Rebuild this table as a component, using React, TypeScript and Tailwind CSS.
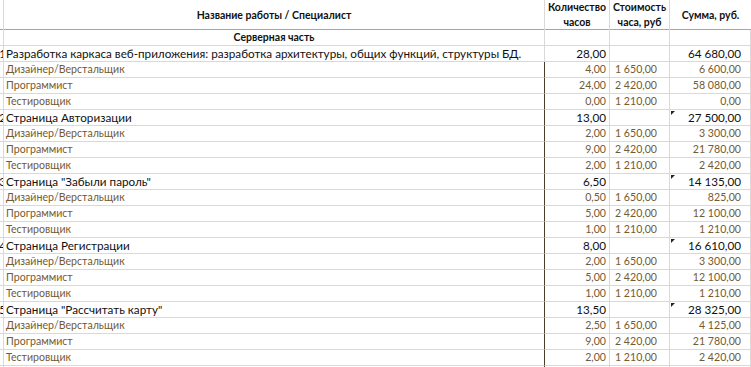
import React from "react";

type Item = [string, string, string, string];
type Group = { n: string; name: string; hours: string; sum: string; mark: boolean; items: Item[] };

const groups: Group[] = [
  {
    n: "1",
    name: "Разработка каркаса веб-приложения: разработка архитектуры, общих функций, структуры БД.",
    hours: "28,00",
    sum: "64 680,00",
    mark: false,
    items: [
      ["Дизайнер/Верстальщик", "4,00", "1 650,00", "6 600,00"],
      ["Программист", "24,00", "2 420,00", "58 080,00"],
      ["Тестировщик", "0,00", "1 210,00", "0,00"],
    ],
  },
  {
    n: "2",
    name: "Страница Авторизации",
    hours: "13,00",
    sum: "27 500,00",
    mark: true,
    items: [
      ["Дизайнер/Верстальщик", "2,00", "1 650,00", "3 300,00"],
      ["Программист", "9,00", "2 420,00", "21 780,00"],
      ["Тестировщик", "2,00", "1 210,00", "2 420,00"],
    ],
  },
  {
    n: "3",
    name: 'Страница "Забыли пароль"',
    hours: "6,50",
    sum: "14 135,00",
    mark: true,
    items: [
      ["Дизайнер/Верстальщик", "0,50", "1 650,00", "825,00"],
      ["Программист", "5,00", "2 420,00", "12 100,00"],
      ["Тестировщик", "1,00", "1 210,00", "1 210,00"],
    ],
  },
  {
    n: "4",
    name: "Страница Регистрации",
    hours: "8,00",
    sum: "16 610,00",
    mark: true,
    items: [
      ["Дизайнер/Верстальщик", "2,00", "1 650,00", "3 300,00"],
      ["Программист", "5,00", "2 420,00", "12 100,00"],
      ["Тестировщик", "1,00", "1 210,00", "1 210,00"],
    ],
  },
  {
    n: "5",
    name: 'Страница "Рассчитать карту"',
    hours: "13,50",
    sum: "28 325,00",
    mark: true,
    items: [
      ["Дизайнер/Верстальщик", "2,50", "1 650,00", "4 125,00"],
      ["Программист", "9,00", "2 420,00", "21 780,00"],
      ["Тестировщик", "2,00", "1 210,00", "2 420,00"],
    ],
  },
];

const grid = "grid grid-cols-[4px_541px_65px_60px_1fr]";
const cell = "border-r border-b border-[#d9d9d9] h-4 flex items-center overflow-hidden whitespace-nowrap";

function Mark() {
  return (
    <span className="absolute left-[1px] top-[1px] w-0 h-0 border-t-[4px] border-r-[4px] border-t-[#222] border-r-transparent" />
  );
}

function GroupRow({ g, first }: { g: Group; first: boolean }) {
  const f = "font-['Lato',sans-serif] text-[11.7px] text-[#111]";
  return (
    <div className={grid}>
      <div className={`${cell} justify-end ${f}`}>
        <span className="translate-x-[3px]">{g.n}</span>
      </div>
      <div className={`${cell} ${f} pl-[2px] ${first ? "" : "border-r-[#4a3c2c]"}`}>{g.name}</div>
      <div className={`${cell} ${f} justify-end pr-[3px]`}>{g.hours}</div>
      <div className={`${cell}`} />
      <div className={`${cell} ${f} justify-end pr-[9px] relative`}>
        {g.mark && <Mark />}
        {g.sum}
      </div>
    </div>
  );
}

function ItemRow({ it }: { it: Item }) {
  const f = "font-['Lato',sans-serif] text-[10.6px] text-[#735a33]";
  return (
    <div className={grid}>
      <div className={cell} />
      <div className={`${cell} ${f} pl-[2px] border-r-[#4a3c2c]`}>{it[0]}</div>
      <div className={`${cell} ${f} justify-end pr-[3px]`}>{it[1]}</div>
      <div className={`${cell} ${f} justify-end pr-[12px]`}>{it[2]}</div>
      <div className={`${cell} ${f} justify-end pr-[9px]`}>{it[3]}</div>
    </div>
  );
}

export default function App() {
  const hf = "font-['Lato',sans-serif] font-bold text-[10.5px] text-[#111] leading-[15px]";
  return (
    <div className="w-[751px] h-[367px] overflow-hidden bg-white">
      {/* header */}
      <div className={`${grid} h-[30px] border-b border-[#a6a6a6]`}>
        <div className="border-r border-[#d9d9d9]" />
        <div className={`border-r border-[#d9d9d9] flex items-center justify-center ${hf}`}>
          Название работы / Специалист
        </div>
        <div className={`border-r border-[#d9d9d9] flex flex-col items-center justify-center ${hf}`}>
          <span>Количество</span>
          <span>часов</span>
        </div>
        <div className={`border-r border-[#d9d9d9] flex flex-col items-center justify-center ${hf}`}>
          <span>Стоимость</span>
          <span>часа, руб</span>
        </div>
        <div className={`flex items-center justify-center ${hf}`}>Сумма, руб.</div>
      </div>
      {/* section row */}
      <div className={grid}>
        <div className={cell} />
        <div className={`${cell} justify-center ${hf}`}>Серверная часть</div>
        <div className={cell} />
        <div className={cell} />
        <div className={cell} />
      </div>
      {groups.map((g, i) => (
        <React.Fragment key={i}>
          <GroupRow g={g} first={i === 0} />
          {g.items.map((it, j) => (
            <ItemRow key={j} it={it} />
          ))}
        </React.Fragment>
      ))}
      <div className={grid}>
        <div className={cell} />
        <div className={`${cell} border-r-[#4a3c2c]`} />
        <div className={cell} />
        <div className={cell} />
        <div className={`${cell} relative`}>
          <Mark />
        </div>
      </div>
    </div>
  );
}
